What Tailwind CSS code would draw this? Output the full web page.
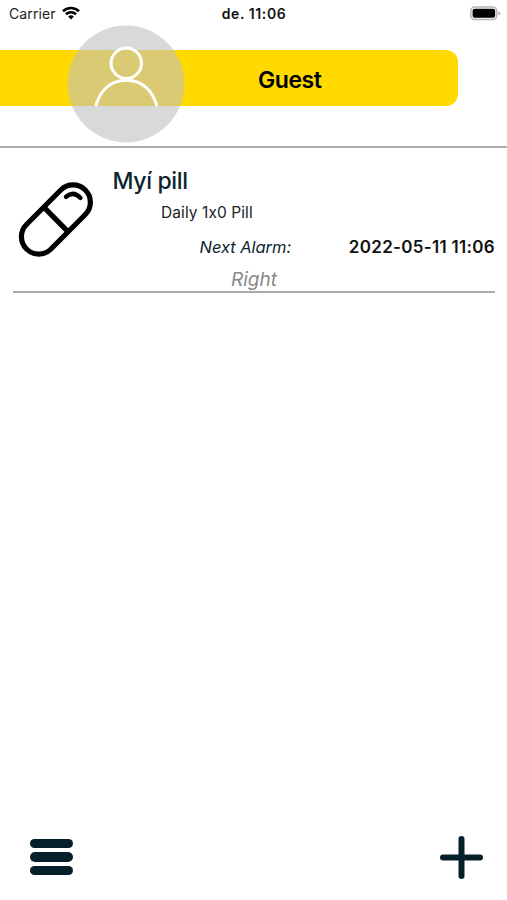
<!DOCTYPE html>
<html lang="en">
<head>
    <meta charset="UTF-8">
    <meta name="viewport" content="width=device-width, initial-scale=1.0">
    <title>Pill Reminder</title>
    <script src="https://cdn.jsdelivr.net/npm/@tailwindcss/browser@4"></script>
</head>
<body class="bg-white font-['Inter',sans-serif] text-black [font-feature-settings:'calt'_0]">
    <div class="flex h-[900px] w-[507px] flex-col overflow-hidden">

        <!-- Status Bar -->
        <div class="grid h-7 shrink-0 grid-cols-3 items-center pl-[9px] pr-[6px] text-sm leading-7">
            <div class="flex items-center gap-1.5 text-[#222]">
                <span class="text-[14px] tracking-[0.12px]">Carrier</span>
                <svg class="h-[14px] w-[18px] -translate-y-px" viewBox="0 0 18 14" fill="none" stroke="#000" stroke-width="2.6">
                    <path d="M1 5.2C5.5 .9 12.5 .9 17 5.2"/>
                    <path d="M3.9 8.3C6.8 5.6 11.2 5.6 14.1 8.3"/>
                    <path d="M6.1 10.5Q9 8.1 11.9 10.5L9 13.4Z" fill="#000" stroke="none"/>
                </svg>
            </div>
            <span class="pr-[2px] text-center text-[14px] font-semibold tracking-[0.6px] text-[#111]">de. 11:06</span>
            <svg class="h-[15px] w-[31px] -translate-y-px justify-self-end" viewBox="0 0 31 15">
                <rect x=".8" y="1" width="26" height="12.6" rx="4" fill="#fff" stroke="#b3b3b3" stroke-width="1.5"/>
                <rect x="2.6" y="2.8" width="22.6" height="9" rx="2" fill="#000"/>
                <path d="M28.5 5.2Q30.3 6 30.3 7.3T28.5 9.4Z" fill="#aaa"/>
            </svg>
        </div>

        <!-- User Header -->
        <header class="h-[120px] shrink-0 border-b-2 border-[#aaa] pt-[22px]">
            <div class="relative flex h-14 w-[458px] items-center rounded-r-xl bg-[#ffd900] pl-[258px]">
                <h1 class="pt-1 text-[23px] font-semibold leading-7 tracking-[-0.45px]">Guest</h1>
                <div class="absolute -top-[25px] left-[67px] size-[118px]">
                    <svg class="size-full" viewBox="0 0 118 118" fill="none" stroke="#fff" stroke-width="3">
                        <circle cx="59" cy="59" r="58.4" fill="#c0c0c0" fill-opacity=".6" stroke="none"/>
                        <circle cx="59.3" cy="38.3" r="15.2"/>
                        <path d="M28.8 81C33 65 44 55.3 59.3 55.3S85.6 65 89.8 81"/>
                    </svg>
                </div>
            </div>
        </header>

        <!-- Pill List -->
        <main class="flex-1 pl-[13px] pr-3">
            <div class="flex h-[145px] flex-col border-b-2 border-[#aaa] pt-[19px]">
                <div class="flex">
                    <svg class="mt-[14px] h-[77px] w-20 shrink-0" viewBox="13 181 80 77" fill="none" stroke="#000" stroke-width="5.2" overflow="visible">
                        <path d="M60.8 190A17.3 17.3 0 0 1 85.3 214.5L51 249A17.3 17.3 0 0 1 26.5 224.5Z"/>
                        <path d="M44 207.3L68.2 231.8"/>
                        <path d="M66 196.8Q73.5 190.5 80.5 198" stroke-width="4.4" stroke-linecap="round"/>
                    </svg>
                    <div class="flex flex-1 flex-col pl-[19.5px] pr-px">
                        <h2 class="h-7 text-[23px] font-medium leading-7 tracking-[-0.35px] text-[#0b242e]">Myí pill</h2>
                        <p class="mt-2 h-5 pl-[48.5px] text-[15.5px] leading-5 tracking-[0.08px] text-[#222]">Daily 1x0 Pill</p>
                        <div class="mt-3 flex h-6 items-center justify-between pl-[87px] leading-6">
                            <span class="text-[16.5px] italic tracking-[-0.05px] text-[#0b242e]">Next Alarm:</span>
                            <span class="-mr-[0.9px] text-[17px] font-semibold tracking-[0.3px] text-[#111]">2022-05-11 11:06</span>
                        </div>
                    </div>
                </div>
                <p class="mt-[9px] h-6 text-center text-[19px] italic leading-6 text-[#888]">Right</p>
            </div>
        </main>

        <!-- Bottom Toolbar -->
        <footer class="flex h-[86px] shrink-0 items-center justify-between pl-[30px] pr-6">
            <button aria-label="Menu" class="flex w-[43px] flex-col gap-1">
                <span class="h-[9.5px] rounded-full bg-[#06202a]"></span>
                <span class="h-[9.5px] rounded-full bg-[#06202a]"></span>
                <span class="h-[9.5px] rounded-full bg-[#06202a]"></span>
            </button>
            <button aria-label="Add">
                <svg class="size-[43px]" viewBox="0 0 43 43" stroke="#06202a" stroke-width="6" stroke-linecap="round">
                    <path d="M3 21.5H40M21.5 3V40"/>
                </svg>
            </button>
        </footer>
    </div>
</body>
</html>
